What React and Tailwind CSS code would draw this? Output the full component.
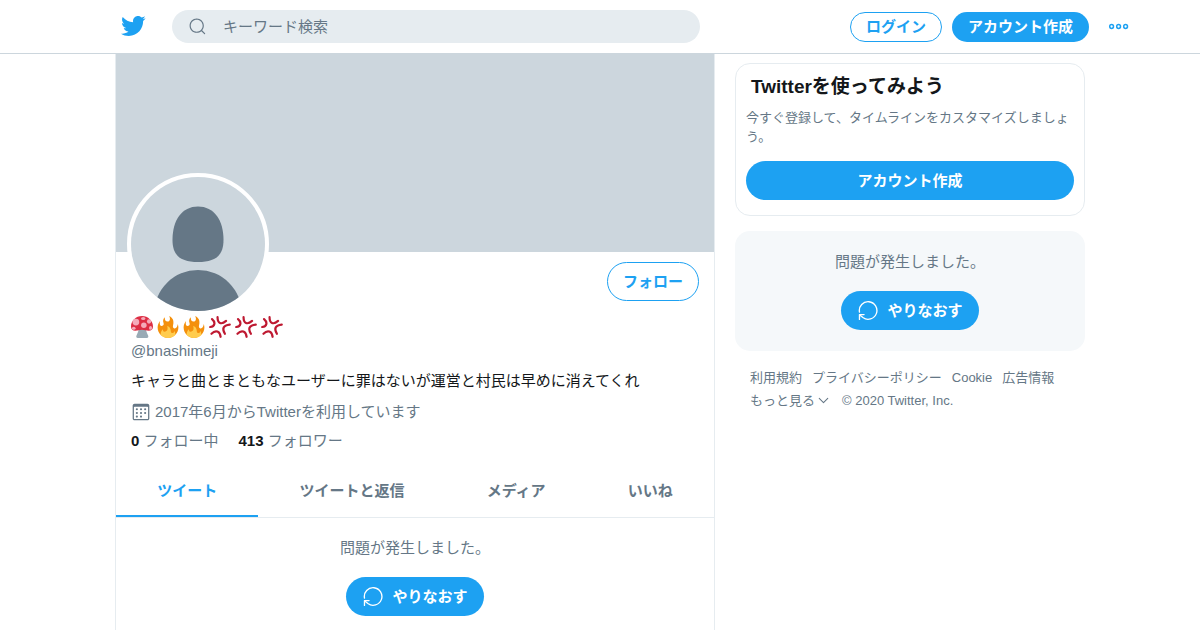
import { ChevronDown } from "lucide-react";

const TwitterIcon = () => (
  <svg viewBox="0 0 24 24" className="w-[26px] h-[26px] fill-[#1da1f2]" aria-hidden="true">
    <path d="M23.643 4.937c-.835.37-1.732.62-2.675.733.962-.576 1.7-1.49 2.048-2.578-.9.534-1.897.922-2.958 1.13-.85-.904-2.06-1.47-3.4-1.47-2.572 0-4.658 2.086-4.658 4.66 0 .364.042.718.12 1.06-3.873-.195-7.304-2.05-9.602-4.868-.4.69-.63 1.49-.63 2.342 0 1.616.823 3.043 2.072 3.878-.764-.025-1.482-.234-2.11-.583v.06c0 2.257 1.605 4.14 3.737 4.568-.392.106-.803.162-1.227.162-.3 0-.593-.028-.877-.082.593 1.85 2.313 3.198 4.352 3.234-1.595 1.25-3.604 1.995-5.786 1.995-.376 0-.747-.022-1.112-.065 2.062 1.323 4.51 2.093 7.14 2.093 8.57 0 13.255-7.098 13.255-13.254 0-.2-.005-.402-.014-.602.91-.658 1.7-1.477 2.323-2.41z" />
  </svg>
);

const SearchIcon = () => (
  <svg viewBox="0 0 24 24" className="w-[19px] h-[19px] shrink-0 fill-[#657786]" aria-hidden="true">
    <path d="M21.53 20.47l-3.66-3.66C19.195 15.24 20 13.214 20 11c0-4.97-4.03-9-9-9s-9 4.03-9 9 4.03 9 9 9c2.215 0 4.24-.804 5.808-2.13l3.66 3.66c.147.146.34.22.53.22s.385-.073.53-.22c.295-.293.295-.767.002-1.06zM3.5 11c0-4.135 3.365-7.5 7.5-7.5s7.5 3.365 7.5 7.5-3.365 7.5-7.5 7.5-7.5-3.365-7.5-7.5z" />
  </svg>
);

const MoreIcon = () => (
  <svg viewBox="0 0 20 8" className="w-5 h-2" fill="none" stroke="#1da1f2" strokeWidth="1.5" aria-hidden="true">
    <circle cx="2.6" cy="3.5" r="1.9" />
    <circle cx="9.6" cy="3.5" r="1.9" />
    <circle cx="16.6" cy="3.5" r="1.9" />
  </svg>
);

const RetryIcon = () => (
  <svg
    viewBox="0 0 22 22"
    className="w-[21px] h-[21px]"
    fill="none"
    stroke="currentColor"
    strokeWidth="1.4"
    strokeLinecap="round"
    strokeLinejoin="round"
    aria-hidden="true"
  >
    <path d="M2.600 12.6A9.2 9.2 0 1 1 6.2 18.400L2.900 15.700" />
    <path d="M2.600 20.300V15.300H7.400" />
  </svg>
);

const CalendarIcon = () => (
  <svg viewBox="0 0 24 24" className="w-5 h-5 fill-[#657786]" aria-hidden="true">
    <path d="M19.708 2H4.292C3.028 2 2 3.028 2 4.292v15.416C2 20.972 3.028 22 4.292 22h15.416C20.972 22 22 20.972 22 19.708V4.292C22 3.028 20.972 2 19.708 2zm.792 17.708c0 .437-.355.792-.792.792H4.292c-.437 0-.792-.355-.792-.792V6.418c0-.437.354-.79.79-.792h15.42c.436 0 .79.355.79.79V19.71z" />
    <circle cx="7.032" cy="8.75" r="1.285" />
    <circle cx="7.032" cy="13.156" r="1.285" />
    <circle cx="16.968" cy="8.75" r="1.285" />
    <circle cx="16.968" cy="13.156" r="1.285" />
    <circle cx="12" cy="8.75" r="1.285" />
    <circle cx="12" cy="13.156" r="1.285" />
    <circle cx="7.032" cy="17.486" r="1.285" />
    <circle cx="12" cy="17.486" r="1.285" />
  </svg>
);

const Mushroom = () => (
  <svg viewBox="0 0 36 36" className="w-[22px] h-[22px]" role="img" aria-label="キノコ">
    <path fill="#99aab5" d="M13 18h11c0 6 2 9 4 14 1 2 0 4-2 4H11c-2 0-3-2-2-4 2-5 4-8 4-14z" />
    <path fill="#dd2e44" d="M18 0C8 0 0 8 0 17c0 5 3 7 7 7 4 0 7-1.500 11-1.500S25 24 29 24c4 0 7-2 7-7C36 8 28 0 18 0z" />
    <g fill="#f4abba">
      <circle cx="8" cy="10" r="5.500" />
      <circle cx="21" cy="15" r="4.500" />
      <ellipse cx="20" cy="4" rx="3.500" ry="2.500" />
      <circle cx="29.500" cy="9" r="3.500" />
      <ellipse cx="4.500" cy="20" rx="3" ry="2.500" />
      <ellipse cx="32" cy="19.500" rx="2.500" ry="3" />
    </g>
  </svg>
);

const Fire = () => (
  <svg viewBox="0 0 36 36" className="w-[22px] h-[22px]" role="img" aria-label="炎">
    <path fill="#f4900c" d="M35 19c0-2.062-.367-4.039-1.04-5.868-.46 5.389-3.333 8.157-6.335 6.868-2.812-1.208-.917-5.917-.777-8.164.236-3.809-.012-8.169-6.931-11.794 2.875 5.5.333 8.917-2.333 9.125-2.958.231-5.667-2.542-4.667-7.042-3.238 2.386-3.332 6.402-2.333 9 1.042 2.708-.042 4.958-2.583 5.208-2.84.28-4.418-3.041-2.963-8.333C2.52 10.965 1 14.805 1 19c0 9.389 7.611 17 17 17s17-7.611 17-17z" />
    <path fill="#ffcc4d" d="M28.394 23.999c.148 3.084-2.561 4.293-4.019 3.709-2.106-.843-1.541-2.291-2.083-5.291s-2.625-5.083-5.708-6c2.25 6.333-1.247 8.667-3.08 9.084-1.872.426-3.753-.001-3.968-4.007C7.352 23.668 6 26.676 6 30c0 .368.023.73.055 1.09C9.125 34.124 13.342 36 18 36s8.875-1.876 11.945-4.91c.032-.36.055-.722.055-1.09 0-2.187-.584-4.236-1.606-6.001z" />
  </svg>
);

const Anger = () => (
  <svg
    viewBox="0 0 36 36"
    className="w-[22px] h-[22px]"
    role="img"
    aria-label="怒り"
    fill="none"
    stroke="#be1931"
    strokeWidth="3.600"
    strokeLinecap="round"
  >
    <path d="M5 5C11 10 10 17 2 18" />
    <path d="M14 2C14 12 20 15 28 8" />
    <path d="M34 14C23 15 21 21 26 29" />
    <path d="M4 29C11 22 18 25 19 34" />
  </svg>
);

const Avatar = () => (
  <svg viewBox="0 0 134 134" className="block w-full h-full rounded-full" role="img" aria-label="プロフィール画像">
    <rect width="134" height="134" fill="#ccd6dd" />
    <path
      fill="#657786"
      d="M67 29.500C51 29.500 41.500 43 41.500 63C41.500 79 50 85 67 85S92.500 79 92.500 63C92.500 43 83 29.500 67 29.500z"
    />
    <circle cx="67" cy="137" r="44" fill="#657786" />
  </svg>
);

const ErrorMessage = () => (
  <div className="flex flex-col items-center gap-[18px]">
    <p className="text-[15px] leading-[22px] text-[#657786]">問題が発生しました。</p>
    <button className="flex items-center gap-[9px] h-[39px] px-4 rounded-full bg-[#1da1f2] text-white text-[15px] font-bold">
      <RetryIcon />
      <span className="pt-0.5">やりなおす</span>
    </button>
  </div>
);

const Header = () => (
  <header className="border-b border-[#ccd6dd] bg-white">
    <div className="max-w-[1060px] h-[53px] mx-auto pl-[50px] flex items-center">
      <a href="#" aria-label="Twitter" className="shrink-0 pb-0.5">
        <TwitterIcon />
      </a>
      <label className="ml-[26px] flex-1 max-w-[528px] h-[33px] px-4 flex items-center gap-4 rounded-full bg-[#e6ecf0]">
        <SearchIcon />
        <input
          type="text"
          aria-label="キーワード検索"
          placeholder="キーワード検索"
          className="flex-1 min-w-0 pt-0.5 bg-transparent text-[15px] outline-none placeholder:text-[#657786]"
        />
      </label>
      <nav className="ml-auto flex items-center shrink-0 text-[15px] font-bold">
        <button className="h-[30px] px-[15px] pt-0.5 rounded-full border border-[#1da1f2] text-[#1da1f2]">
          ログイン
        </button>
        <button className="ml-[10px] h-[30px] px-4 pt-0.5 rounded-full bg-[#1da1f2] text-white">
          アカウント作成
        </button>
        <button aria-label="もっと見る" className="ml-5 mr-px">
          <MoreIcon />
        </button>
      </nav>
    </div>
  </header>
);

const tabs = ["ツイート", "ツイートと返信", "メディア", "いいね"];

const Profile = () => (
  <main className="w-full max-w-[600px] min-h-[576px] border-x border-[#e6ecf0]">
    <div className="h-[198px] bg-[#ccd6dd]" />
    <div className="px-[15px] pt-[10px]">
      <div className="flex items-start justify-between">
        <div className="-mt-[89px] -ml-1 w-[142px] h-[142px] rounded-full border-4 border-white bg-white">
          <Avatar />
        </div>
        <button className="h-[39px] px-[15px] pt-0.5 rounded-full border border-[#1da1f2] text-[#1da1f2] text-[15px] font-bold">
          フォロー
        </button>
      </div>
      <h1 className="h-6 flex items-center gap-1">
        <Mushroom />
        <Fire />
        <Fire />
        <Anger />
        <Anger />
        <Anger />
      </h1>
      <p className="mt-px text-[15px] leading-[22px] text-[#657786]">@bnashimeji</p>
      <p className="mt-2 text-[15px] leading-[22px]">
        キャラと曲とまともなユーザーに罪はないが運営と村民は早めに消えてくれ
      </p>
      <p className="mt-[9px] flex items-center gap-1 text-[15px] leading-[22px] text-[#657786]">
        <CalendarIcon />
        2017年6月からTwitterを利用しています
      </p>
      <div className="mt-[7px] flex gap-5 text-[15px] leading-[22px] text-[#657786]">
        <a href="#">
          <span className="font-bold text-[#14171a]">0</span> フォロー中
        </a>
        <a href="#">
          <span className="font-bold text-[#14171a]">413</span> フォロワー
        </a>
      </div>
    </div>
    <nav className="mt-3 flex border-b border-[#e6ecf0] text-[15px] font-bold">
      {tabs.map((tab, index) => (
        <a
          key={tab}
          href="#"
          className={`h-[53px] px-[41px] pt-1 grow flex items-center justify-center whitespace-nowrap border-b-2 ${
            index === 0 ? "border-[#1da1f2] text-[#1da1f2]" : "border-transparent text-[#657786]"
          }`}
        >
          {tab}
        </a>
      ))}
    </nav>
    <div className="px-5 pt-[19px] pb-5">
      <ErrorMessage />
    </div>
  </main>
);

const Sidebar = () => (
  <aside className="w-[350px] shrink-0 pt-[9px]">
    <section className="px-[10px] pt-[9px] pb-[15px] rounded-[15px] border border-[#e6ecf0]">
      <h2 className="px-[5px] text-[19px] leading-7 font-bold">Twitterを使ってみよう</h2>
      <p className="mt-[7px] text-[13px] leading-[19px] text-[#657786]">
        今すぐ登録して、タイムラインをカスタマイズしましょう。
      </p>
      <button className="mt-[15px] w-full h-[39px] pt-0.5 rounded-full bg-[#1da1f2] text-white text-[15px] font-bold">
        アカウント作成
      </button>
    </section>
    <section className="mt-[15px] px-5 pt-5 pb-[21px] rounded-[15px] bg-[#f5f8fa]">
      <ErrorMessage />
    </section>
    <footer className="mt-[17px] px-[15px] flex flex-wrap gap-x-[10px] gap-y-1 text-[13px] leading-[19px] text-[#657786]">
      <a href="#" className="hover:underline">利用規約</a>
      <a href="#" className="hover:underline">プライバシーポリシー</a>
      <a href="#" className="hover:underline">Cookie</a>
      <a href="#" className="hover:underline">広告情報</a>
      <button className="flex items-center">
        もっと見る
        <ChevronDown className="w-[17px] h-[17px]" strokeWidth={1.5} />
      </button>
      <span>© 2020 Twitter, Inc.</span>
    </footer>
  </aside>
);

const App = () => {
  return (
    <div
      lang="ja"
      className="min-h-screen bg-white text-[#14171a] font-['Liberation_Sans','Noto_Sans_CJK_JP',sans-serif]"
    >
      <Header />
      <div className="max-w-[970px] mx-auto flex items-start gap-5">
        <Profile />
        <Sidebar />
      </div>
    </div>
  );
};

export default App;
